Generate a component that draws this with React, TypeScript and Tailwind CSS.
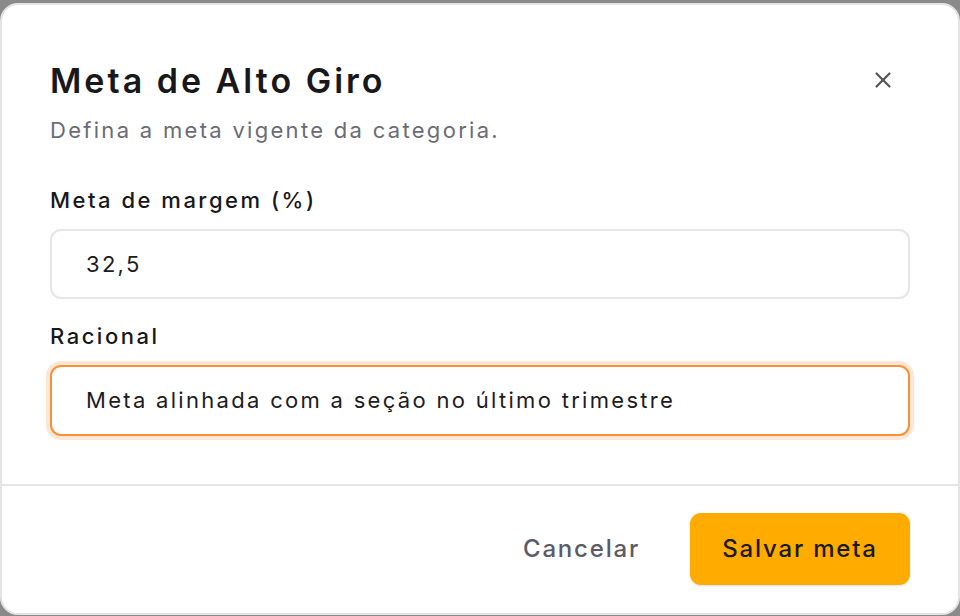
import { X } from "lucide-react";

const font = { fontFamily: "Inter, 'Noto Sans', sans-serif" };

function Field({
  label,
  value,
  focused,
  className,
}: {
  label: string;
  value: string;
  focused?: boolean;
  className?: string;
}) {
  return (
    <div className={className}>
      <label className="block text-[22px] leading-[28px] font-medium text-[#18181b] tracking-[2.5px]">
        {label}
      </label>
      <div
        className={
          focused
            ? "mt-[15px] h-[71px] rounded-[11px] border-2 border-[#f7913a] ring-4 ring-[#fde6d3] bg-white flex items-center px-[34px]"
            : "mt-[15px] h-[70px] rounded-[11px] border-2 border-[#e6e6e8] bg-white flex items-center px-[34px]"
        }
      >
        <span className="text-[22px] text-[#1c1c1f] tracking-[2.3px]">{value}</span>
      </div>
    </div>
  );
}

export default function App() {
  return (
    <div className="w-[960px] h-[616px] bg-[#8a8a8a] pt-[3px] overflow-hidden" style={font}>
      <div className="h-[612px] bg-white rounded-[18px] border-2 border-[#e4e4e7] flex flex-col">
        <div className="px-[48px] pt-[56px]">
          <div className="flex items-start justify-between">
            <h1 className="text-[34px] leading-[40px] font-semibold text-[#18181b] tracking-[3px]">
              Meta de Alto Giro
            </h1>
            <button className="mt-[6px] mr-[14px] text-[#52525b]">
              <X size={26} strokeWidth={2} />
            </button>
          </div>
          <p className="mt-[15px] text-[22px] leading-[28px] text-[#6b6b75] tracking-[2.3px]">
            Defina a meta vigente da categoria.
          </p>
          <Field className="mt-[42px]" label="Meta de margem (%)" value="32,5" />
          <Field
            className="mt-[23px]"
            label="Racional"
            value="Meta alinhada com a seção no último trimestre"
            focused
          />
        </div>
        <div className="mt-[48px] border-t-2 border-[#e6e6e8]" />
        <div className="flex justify-end items-center gap-[50px] px-[48px] pt-[27px]">
          <button className="text-[24px] font-medium text-[#5b5b66] tracking-[1.8px]">
            Cancelar
          </button>
          <button className="h-[72px] w-[220px] rounded-[11px] bg-[#ffab00] text-[24px] font-medium text-[#1a1a1a] tracking-[1.8px] shadow-sm">
            Salvar meta
          </button>
        </div>
      </div>
    </div>
  );
}
